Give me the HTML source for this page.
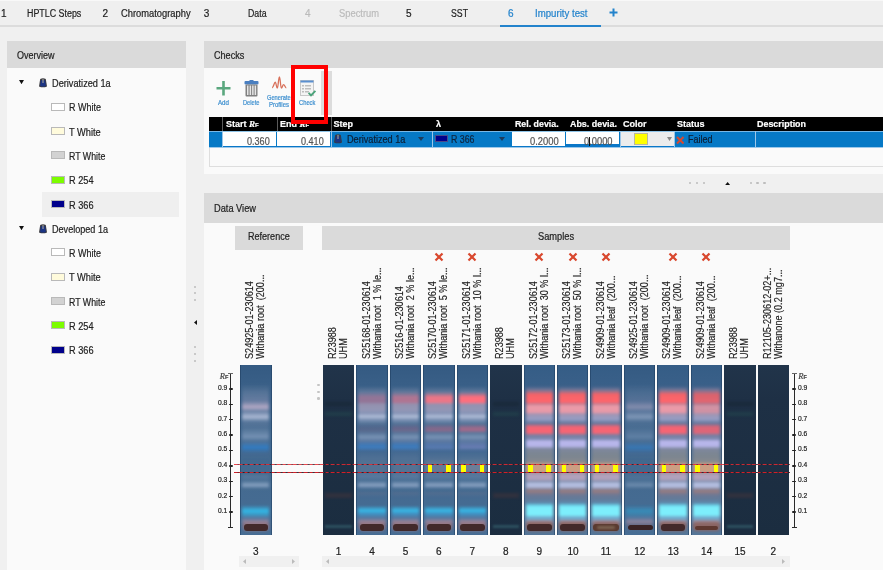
<!DOCTYPE html><html><head><meta charset="utf-8"><style>
*{margin:0;padding:0;box-sizing:border-box}
html,body{width:883px;height:570px;overflow:hidden;background:#f0f0f0;font-family:"Liberation Sans", sans-serif;color:#333}
#root{position:absolute;left:0;top:0;width:883px;height:570px;overflow:hidden;will-change:transform;background:#f0f0f0}
.a{position:absolute}
.t{position:absolute;white-space:nowrap;line-height:12px;-webkit-text-stroke:0.2px currentColor}
.hdr{position:absolute;background:#dadada}
.pan{position:absolute;background:#fafafa}
.sw{position:absolute;border:1px solid #b9b9b9}
.lbl{position:absolute;transform-origin:0 0;transform:rotate(-90deg) scaleX(0.91);font-size:10px;line-height:10.55px;white-space:nowrap;color:#222;-webkit-text-stroke:0.15px currentColor}
.trk{position:absolute;top:365px;height:170px;width:31.5px;overflow:hidden}
.x{position:absolute;top:252px;width:10px;height:10px}
</style></head><body><svg width="0" height="0" style="position:absolute"><filter id="hb" x="-20%" y="-5%" width="140%" height="110%"><feGaussianBlur stdDeviation="1.5 0.8"/></filter><filter id="hb2" x="-20%" y="-5%" width="140%" height="110%"><feGaussianBlur stdDeviation="1.7 1.2"/></filter></svg><div id="root"><div class="a" style="left:0;top:0;width:883px;height:25px;background:#efefef;border-top:1px solid #f8f8f8"></div><div class="a" style="left:0;top:25px;width:883px;height:2px;background:#dcdcdc"></div><div class="t" style="left:1.0px;top:8px;font-size:10px;color:#222;">1</div><div class="t" style="left:26.7px;top:8px;font-size:10px;color:#222;transform:scaleX(0.8882);transform-origin:0 0;">HPTLC Steps</div><div class="t" style="left:102.5px;top:8px;font-size:10px;color:#222;">2</div><div class="t" style="left:120.5px;top:8px;font-size:10px;color:#222;transform:scaleX(0.9344);transform-origin:0 0;">Chromatography</div><div class="t" style="left:203.7px;top:8px;font-size:10px;color:#222;">3</div><div class="t" style="left:247.5px;top:8px;font-size:10px;color:#222;transform:scaleX(0.8758);transform-origin:0 0;">Data</div><div class="t" style="left:305px;top:8px;font-size:10px;color:#bbb;">4</div><div class="t" style="left:339px;top:8px;font-size:10px;color:#bbb;transform:scaleX(0.9347);transform-origin:0 0;">Spectrum</div><div class="t" style="left:406px;top:8px;font-size:10px;color:#222;">5</div><div class="t" style="left:451px;top:8px;font-size:10px;color:#222;transform:scaleX(0.8741);transform-origin:0 0;">SST</div><div class="t" style="left:508px;top:8px;font-size:10px;color:#2383cc;">6</div><div class="t" style="left:535px;top:8px;font-size:10px;color:#2383cc;transform:scaleX(0.9640);transform-origin:0 0;">Impurity test</div><div class="a" style="left:499.8px;top:25px;width:101.2px;height:2px;background:#2383cc"></div><svg class="a" style="left:609px;top:8px" width="9" height="9"><path d="M4.5 0.5V8.5M0.5 4.5H8.5" stroke="#2383cc" stroke-width="2"/></svg><div class="pan" style="left:7px;top:41px;width:179px;height:529px"></div><div class="hdr" style="left:7px;top:41px;width:179px;height:26.5px"></div><div class="t" style="left:16.7px;top:50px;font-size:10px;color:#222;transform:scaleX(0.8998);transform-origin:0 0;">Overview</div><div class="a" style="left:42px;top:192px;width:137px;height:24.5px;background:#efefef"></div><svg class="a" style="left:19px;top:80.1px" width="5" height="4.2"><path d="M0 0H5L2.5 4.2Z" fill="#111"/></svg><svg class="a" style="left:38px;top:78.0px" width="10" height="10" viewBox="0 0 10 10"><path d="M2.2 1Q5 -0.4 7.8 1L9 8.4Q5 10.2 1 8.4Z" fill="#3a3a40"/><path d="M2.9 2.2H7.1L7.9 7.9Q5 9 2.1 7.9Z" fill="#1b3484"/><rect x="4.4" y="0.8" width="1.2" height="4.2" fill="#9a9a9a"/></svg><div class="t" style="left:52.3px;top:78px;font-size:10px;color:#222;transform:scaleX(0.9183);transform-origin:0 0;">Derivatized 1a</div><div class="sw" style="left:51px;top:102.5px;width:13.5px;height:8px;background:#ffffff"></div><div class="t" style="left:68.7px;top:102px;font-size:10px;color:#222;transform:scaleX(0.8970);transform-origin:0 0;">R White</div><div class="sw" style="left:51px;top:126.8px;width:13.5px;height:8px;background:#fffbdc"></div><div class="t" style="left:68.7px;top:127px;font-size:10px;color:#222;transform:scaleX(0.9260);transform-origin:0 0;">T White</div><div class="sw" style="left:51px;top:151.2px;width:13.5px;height:8px;background:#d2d2d2"></div><div class="t" style="left:68.7px;top:151px;font-size:10px;color:#222;transform:scaleX(0.8797);transform-origin:0 0;">RT White</div><div class="sw" style="left:51px;top:175.5px;width:13.5px;height:8px;background:#7cfc00"></div><div class="t" style="left:68.7px;top:175px;font-size:10px;color:#222;transform:scaleX(0.9181);transform-origin:0 0;">R 254</div><div class="sw" style="left:51px;top:199.9px;width:13.5px;height:8px;background:#00008b"></div><div class="t" style="left:68.7px;top:200px;font-size:10px;color:#222;transform:scaleX(0.9181);transform-origin:0 0;">R 366</div><svg class="a" style="left:19px;top:225.8px" width="5" height="4.2"><path d="M0 0H5L2.5 4.2Z" fill="#111"/></svg><svg class="a" style="left:38px;top:223.7px" width="10" height="10" viewBox="0 0 10 10"><path d="M2.2 1Q5 -0.4 7.8 1L9 8.4Q5 10.2 1 8.4Z" fill="#3a3a40"/><path d="M2.9 2.2H7.1L7.9 7.9Q5 9 2.1 7.9Z" fill="#1b3484"/><rect x="4.4" y="0.8" width="1.2" height="4.2" fill="#9a9a9a"/></svg><div class="t" style="left:52.3px;top:224px;font-size:10px;color:#222;transform:scaleX(0.9074);transform-origin:0 0;">Developed 1a</div><div class="sw" style="left:51px;top:248.2px;width:13.5px;height:8px;background:#ffffff"></div><div class="t" style="left:68.7px;top:248px;font-size:10px;color:#222;transform:scaleX(0.8970);transform-origin:0 0;">R White</div><div class="sw" style="left:51px;top:272.5px;width:13.5px;height:8px;background:#fffbdc"></div><div class="t" style="left:68.7px;top:272px;font-size:10px;color:#222;transform:scaleX(0.9260);transform-origin:0 0;">T White</div><div class="sw" style="left:51px;top:296.9px;width:13.5px;height:8px;background:#d2d2d2"></div><div class="t" style="left:68.7px;top:297px;font-size:10px;color:#222;transform:scaleX(0.8797);transform-origin:0 0;">RT White</div><div class="sw" style="left:51px;top:321.2px;width:13.5px;height:8px;background:#7cfc00"></div><div class="t" style="left:68.7px;top:321px;font-size:10px;color:#222;transform:scaleX(0.9181);transform-origin:0 0;">R 254</div><div class="sw" style="left:51px;top:345.6px;width:13.5px;height:8px;background:#00008b"></div><div class="t" style="left:68.7px;top:345px;font-size:10px;color:#222;transform:scaleX(0.9181);transform-origin:0 0;">R 366</div><div class="a" style="left:193.5px;top:285.5px;width:2.4px;height:2.4px;border-radius:50%;background:#bdbdbd"></div><div class="a" style="left:193.5px;top:292.1px;width:2.4px;height:2.4px;border-radius:50%;background:#bdbdbd"></div><div class="a" style="left:193.5px;top:298.8px;width:2.4px;height:2.4px;border-radius:50%;background:#bdbdbd"></div><div class="a" style="left:193.5px;top:346.0px;width:2.4px;height:2.4px;border-radius:50%;background:#bdbdbd"></div><div class="a" style="left:193.5px;top:352.8px;width:2.4px;height:2.4px;border-radius:50%;background:#bdbdbd"></div><div class="a" style="left:193.5px;top:359.6px;width:2.4px;height:2.4px;border-radius:50%;background:#bdbdbd"></div><svg class="a" style="left:194.3px;top:320.1px" width="3" height="5"><path d="M3 0V5L0 2.5Z" fill="#111"/></svg><div class="pan" style="left:204px;top:41px;width:679px;height:133px"></div><div class="hdr" style="left:204px;top:41px;width:679px;height:26.5px"></div><div class="t" style="left:213.9px;top:50px;font-size:10px;color:#222;transform:scaleX(0.9087);transform-origin:0 0;">Checks</div><svg class="a" style="left:215.5px;top:80.5px" width="15" height="15"><path d="M7.5 0V14.5M0.5 7.25H14.5" stroke="#5aa77e" stroke-width="2.6"/></svg><div class="t" style="left:217.5px;top:97px;font-size:6.5px;color:#3d8fcf;transform:scaleX(0.9511);transform-origin:0 0;">Add</div><svg class="a" style="left:243.5px;top:79.5px" width="15" height="17" viewBox="0 0 15 17"><rect x="0.5" y="1" width="14" height="3.5" rx="1" fill="#4a7fc0"/><rect x="5.5" y="0" width="4" height="2" fill="#4a7fc0"/><rect x="1.5" y="4.5" width="12" height="12" rx="1" fill="#7f7f7f"/><g fill="#e6e6e6"><rect x="3" y="5.5" width="1.5" height="9.5"/><rect x="5.6" y="5.5" width="1.5" height="9.5"/><rect x="8.1" y="5.5" width="1.5" height="9.5"/><rect x="10.6" y="5.5" width="1.5" height="9.5"/></g></svg><div class="t" style="left:242.7px;top:97px;font-size:6.5px;color:#3d8fcf;transform:scaleX(0.8782);transform-origin:0 0;">Delete</div><svg class="a" style="left:271px;top:76px" width="16" height="13" viewBox="0 0 16 13"><path d="M1.1 11.8C2.6 11.6 3.2 6.2 4.2 6.2S5.4 12.1 6.3 12.1S7.5 0.9 8.4 0.9S9.5 12.1 10.4 12.1S11.6 8.6 12.6 8.6S14.3 11.8 15.3 11.8" fill="none" stroke="#d8705a" stroke-width="1.3"/></svg><div class="t" style="left:266.7px;top:92px;font-size:6.5px;color:#3d8fcf;transform:scaleX(0.8745);transform-origin:0 0;">Generate</div><div class="t" style="left:268.8px;top:98.8px;font-size:6.5px;color:#3d8fcf;transform:scaleX(0.9228);transform-origin:0 0;">Profiles</div><svg class="a" style="left:299.5px;top:79.5px" width="17" height="17" viewBox="0 0 17 17"><rect x="0.5" y="0.5" width="13" height="15" fill="#f4f4f4" stroke="#c8c8c8"/><rect x="0.5" y="0.5" width="13" height="2" fill="#5b8fcf"/><g fill="#bdbdbd"><rect x="2" y="5" width="2" height="1.5"/><rect x="5" y="5" width="6" height="1.5"/><rect x="2" y="8" width="2" height="1.5"/><rect x="5" y="8" width="6" height="1.5"/><rect x="2" y="11" width="2" height="1.5"/><rect x="5" y="11" width="4" height="1.5"/></g><path d="M8.6 12.8L11 15.3L15.4 10.9" fill="none" stroke="#4aa37a" stroke-width="1.9"/></svg><div class="t" style="left:298.8px;top:97.2px;font-size:6.5px;color:#3d8fcf;transform:scaleX(0.8901);transform-origin:0 0;">Check</div><div class="a" style="left:321px;top:71px;width:11px;height:44px;background:#dcdcdc"></div><div class="a" style="left:208.5px;top:116.5px;width:680px;height:50px;border:1px solid #dedede;background:#fafafa"></div><div class="a" style="left:209px;top:117px;width:674px;height:14px;background:#000"></div><div class="a" style="left:209px;top:131px;width:674px;height:16.5px;background:#0679c6;border-top:1px solid #78b8e6;border-bottom:1px solid #9cc8ea"></div><div class="a" style="left:222px;top:117px;width:1px;height:14px;background:#5a5a5a"></div><div class="a" style="left:222px;top:131px;width:1px;height:16px;background:#9cc6e8"></div><div class="a" style="left:276.5px;top:117px;width:1px;height:14px;background:#5a5a5a"></div><div class="a" style="left:276.5px;top:131px;width:1px;height:16px;background:#9cc6e8"></div><div class="a" style="left:330.5px;top:117px;width:1px;height:14px;background:#5a5a5a"></div><div class="a" style="left:330.5px;top:131px;width:1px;height:16px;background:#9cc6e8"></div><div class="a" style="left:431.5px;top:131px;width:1px;height:16px;background:#9cc6e8"></div><div class="a" style="left:511.5px;top:131px;width:1px;height:16px;background:#9cc6e8"></div><div class="a" style="left:566px;top:131px;width:1px;height:16px;background:#9cc6e8"></div><div class="a" style="left:620px;top:131px;width:1px;height:16px;background:#9cc6e8"></div><div class="a" style="left:673.5px;top:131px;width:1px;height:16px;background:#9cc6e8"></div><div class="a" style="left:754.5px;top:131px;width:1px;height:16px;background:#9cc6e8"></div><div class="t" style="left:226px;top:118px;font-size:9px;color:#fff;font-weight:bold;">Start <i style="font-family:'Liberation Serif'">R</i><span style="font-size:6px">F</span></div><div class="t" style="left:280px;top:118px;font-size:9px;color:#fff;font-weight:bold;">End <i style="font-family:'Liberation Serif'">R</i><span style="font-size:6px">F</span></div><div class="t" style="left:333.5px;top:118px;font-size:9px;color:#fff;font-weight:bold;">Step</div><div class="t" style="left:436px;top:118px;font-size:9px;color:#fff;font-weight:bold;">λ</div><div class="t" style="left:515px;top:118px;font-size:9px;color:#fff;font-weight:bold;transform:scaleX(0.9793);transform-origin:0 0;">Rel. devia.</div><div class="t" style="left:569.5px;top:118px;font-size:9px;color:#fff;font-weight:bold;transform:scaleX(0.9891);transform-origin:0 0;">Abs. devia.</div><div class="t" style="left:623px;top:118px;font-size:9px;color:#fff;font-weight:bold;transform:scaleX(1.0001);transform-origin:0 0;">Color</div><div class="t" style="left:677px;top:118px;font-size:9px;color:#fff;font-weight:bold;transform:scaleX(0.9998);transform-origin:0 0;">Status</div><div class="t" style="left:757.4px;top:118px;font-size:9px;color:#fff;font-weight:bold;transform:scaleX(0.9897);transform-origin:0 0;">Description</div><div class="a" style="left:223px;top:131px;width:53.4px;height:16px;background:#fff;border-top:1.5px solid #8ec4e8;border-bottom:1.3px solid #0a77c8"></div><div class="t" style="left:247.09999999999997px;top:136px;font-size:10px;color:#555;transform:scaleX(0.9071);transform-origin:0 0;">0.360</div><div class="a" style="left:277.4px;top:131px;width:53px;height:16px;background:#fff;border-top:1.5px solid #8ec4e8;border-bottom:1.3px solid #0a77c8"></div><div class="t" style="left:301.09999999999997px;top:136px;font-size:10px;color:#555;transform:scaleX(0.9071);transform-origin:0 0;">0.410</div><div class="a" style="left:511.8px;top:131px;width:53.7px;height:16px;background:#fff;border-top:1.5px solid #8ec4e8;border-bottom:1.3px solid #0a77c8"></div><div class="t" style="left:530.3px;top:136px;font-size:10px;color:#555;transform:scaleX(0.9351);transform-origin:0 0;">0.2000</div><div class="a" style="left:566.2px;top:131px;width:52.8px;height:16px;background:#fff;border-top:1.5px solid #8ec4e8;border-bottom:1.3px solid #0a77c8"></div><div class="a" style="left:566.2px;top:143.8px;width:52.8px;height:3.2px;background:#0a77c8"></div><div class="t" style="left:583.9px;top:136px;font-size:10px;color:#555;transform:scaleX(0.9318);transform-origin:0 0;">0.0000</div><div class="a" style="left:589.3px;top:137px;width:1px;height:9px;background:#111"></div><svg class="a" style="left:333px;top:134px" width="10" height="10" viewBox="0 0 10 10"><path d="M2.2 1Q5 -0.4 7.8 1L9 8.4Q5 10.2 1 8.4Z" fill="#3a3a40"/><path d="M2.9 2.2H7.1L7.9 7.9Q5 9 2.1 7.9Z" fill="#1b3484"/><rect x="4.4" y="0.8" width="1.2" height="4.2" fill="#9a9a9a"/></svg><div class="t" style="left:347.4px;top:134px;font-size:10px;color:#0d1e33;transform:scaleX(0.9136);transform-origin:0 0;">Derivatized 1a</div><svg class="a" style="left:418px;top:137px" width="6" height="4"><path d="M0 0H6L3 4Z" fill="#1d3b5c"/></svg><div class="a" style="left:434.5px;top:135px;width:13px;height:7px;background:#00008b;border:1px solid #4a4a8a"></div><div class="t" style="left:451px;top:134px;font-size:10px;color:#10243c;transform:scaleX(0.8807);transform-origin:0 0;">R 366</div><svg class="a" style="left:498.5px;top:137px" width="6" height="4"><path d="M0 0H6L3 4Z" fill="#1d3b5c"/></svg><div class="a" style="left:620.5px;top:131px;width:53px;height:16px;background:#ececec;border-top:1.5px solid #8ec4e8;border-bottom:1.3px solid #0a77c8"></div><div class="a" style="left:633.5px;top:132.5px;width:14.5px;height:12.8px;background:#ffff00;border:1px solid #b8b8a0"></div><svg class="a" style="left:667px;top:137px" width="5" height="4"><path d="M0 0H5L2.5 4Z" fill="#888"/></svg><svg class="a" style="left:675.5px;top:135.5px" width="8.5" height="8.5"><path d="M1 1L7.5 7.5M7.5 1L1 7.5" stroke="#d9482e" stroke-width="2"/></svg><div class="t" style="left:688.4px;top:134px;font-size:10px;color:#0d1e33;transform:scaleX(0.8959);transform-origin:0 0;">Failed</div><div class="a" style="left:688.9px;top:181.9px;width:2.4px;height:2.4px;border-radius:50%;background:#bdbdbd"></div><div class="a" style="left:695.8px;top:181.9px;width:2.4px;height:2.4px;border-radius:50%;background:#bdbdbd"></div><div class="a" style="left:702.5px;top:181.9px;width:2.4px;height:2.4px;border-radius:50%;background:#bdbdbd"></div><div class="a" style="left:749.6px;top:181.9px;width:2.4px;height:2.4px;border-radius:50%;background:#bdbdbd"></div><div class="a" style="left:756.4px;top:181.9px;width:2.4px;height:2.4px;border-radius:50%;background:#bdbdbd"></div><div class="a" style="left:763.2px;top:181.9px;width:2.4px;height:2.4px;border-radius:50%;background:#bdbdbd"></div><svg class="a" style="left:725.4px;top:182.3px" width="5.2" height="3.2"><path d="M0 3.2H5.2L2.6 0Z" fill="#111"/></svg><div class="pan" style="left:204px;top:193px;width:679px;height:377px"></div><div class="hdr" style="left:204px;top:193px;width:679px;height:29.6px"></div><div class="t" style="left:214.1px;top:203px;font-size:10px;color:#222;transform:scaleX(0.9252);transform-origin:0 0;">Data View</div><div class="hdr" style="left:234.7px;top:225.6px;width:68.3px;height:24px"></div><div class="t" style="left:248px;top:231px;font-size:10px;color:#222;transform:scaleX(0.9038);transform-origin:0 0;">Reference</div><div class="hdr" style="left:321.8px;top:225.6px;width:468.2px;height:24px"></div><div class="t" style="left:537.6px;top:231px;font-size:10px;color:#222;transform:scaleX(0.9279);transform-origin:0 0;">Samples</div><div class="trk" style="left:240.0px;background:linear-gradient(#345a82 0.0px,#385e86 15.0px,#3f658c 55.0px,#43698f 105.0px,#476d94 170.0px);box-shadow:inset 1px 0 0 rgba(30,60,95,0.55),inset -1px 0 0 rgba(30,60,95,0.55)"><div class="a" style="left:2.2px;right:2.2px;top:0;bottom:0;background:linear-gradient(rgba(170,180,205,0) 19.0px,rgba(170,175,200,0.25) 28.0px,rgba(180,170,200,0.35) 36.0px,rgba(215,190,215,0.75) 42.0px,rgba(180,180,210,0.4) 46.5px,rgba(210,215,238,0.72) 52.0px,rgba(150,160,190,0.25) 57.0px,rgba(140,155,185,0.2) 63.0px,rgba(165,185,215,0.5) 71.8px,rgba(120,150,190,0.2) 76.5px,rgba(45,130,210,0.75) 82.5px,rgba(70,110,170,0.12) 88.0px,rgba(100,120,160,0) 95.0px,rgba(150,170,200,0) 107.5px,rgba(150,170,200,0.22) 112.0px,rgba(150,170,200,0.08) 115.5px,rgba(180,198,225,0.58) 120.2px,rgba(180,200,225,0) 124.0px,rgba(50,190,238,0) 140.0px,rgba(50,190,238,0.92) 145.8px,rgba(50,190,238,0.5) 150.0px,rgba(120,140,180,0.3) 153.0px,rgba(195,150,165,0.55) 156.5px,rgba(150,100,110,0.4) 160.0px,rgba(150,100,110,0) 166.0px);filter:url(#hb)"></div><div class="a" style="left:2.5px;right:2.5px;top:156.8px;height:9px;background:rgba(175,125,130,0.55);filter:blur(1.4px);border-radius:4px"></div><div class="a" style="left:3.5px;right:3.5px;top:159.0px;height:6.5px;background:#42292a;filter:blur(0.7px);border-radius:3px"></div></div><div class="trk" style="left:322.9px;background:linear-gradient(#21344a 0.0px,#1e3045 35.0px,#1b2d40 170.0px);"><div class="a" style="left:2.5px;right:2.5px;top:37.0px;height:4px;background:rgba(15,25,35,0.3);filter:blur(1.8px);border-radius:0px"></div><div class="a" style="left:2.5px;right:2.5px;top:46.5px;height:4px;background:rgba(40,110,95,0.2);filter:blur(1.8px);border-radius:0px"></div><div class="a" style="left:2.5px;right:2.5px;top:127.5px;height:5px;background:rgba(110,60,50,0.25);filter:blur(1.8px);border-radius:0px"></div><div class="a" style="left:2.5px;right:2.5px;top:160.2px;height:2.5px;background:rgba(70,130,140,0.4);filter:blur(1px);border-radius:0px"></div></div><div class="trk" style="left:356.3px;background:linear-gradient(#345a82 0.0px,#385e86 15.0px,#3f658c 55.0px,#43698f 105.0px,#476d94 170.0px);box-shadow:inset 1px 0 0 rgba(30,60,95,0.55),inset -1px 0 0 rgba(30,60,95,0.55)"><div class="a" style="left:2.2px;right:2.2px;top:0;bottom:0;background:linear-gradient(rgba(180,180,205,0) 21.0px,rgba(180,175,200,0.3) 27.0px,rgba(205,130,160,0.6) 32.0px,rgba(205,130,160,0.6) 37.0px,rgba(205,175,200,0.6) 39.5px,rgba(200,182,208,0.62) 45.0px,rgba(190,185,215,0.55) 48.0px,rgba(210,215,238,0.75) 51.5px,rgba(180,185,215,0.5) 55.0px,rgba(140,150,180,0.22) 59.0px,rgba(200,110,140,0.12) 62.0px,rgba(215,105,135,0.15) 65.0px,rgba(150,155,185,0.28) 68.0px,rgba(175,190,220,0.5) 72.0px,rgba(150,160,200,0.3) 76.0px,rgba(60,135,215,0.52) 79.5px,rgba(60,135,215,0.65) 82.5px,rgba(70,110,170,0.15) 86.0px,rgba(160,165,190,0.12) 93.0px,rgba(185,165,170,0.15) 100.0px,rgba(185,165,170,0.15) 106.0px,rgba(160,170,200,0.15) 108.0px,rgba(150,170,200,0.25) 111.8px,rgba(150,170,200,0.08) 115.5px,rgba(185,200,228,0.58) 120.2px,rgba(180,200,225,0) 124.0px,rgba(160,120,130,0.0) 126.0px,rgba(160,120,130,0.15) 128.0px,rgba(160,120,130,0) 132.0px,rgba(50,180,230,0) 140.5px,rgba(55,190,238,0.92) 145.4px,rgba(60,160,215,0.6) 149.5px,rgba(120,140,180,0.3) 153.0px,rgba(195,145,160,0.6) 156.5px,rgba(150,100,110,0.45) 160.0px,rgba(150,100,110,0) 166.0px);filter:url(#hb)"></div><div class="a" style="left:2.5px;right:2.5px;top:156.8px;height:9px;background:rgba(175,125,130,0.55);filter:blur(1.4px);border-radius:4px"></div><div class="a" style="left:3.5px;right:3.5px;top:159.0px;height:6.5px;background:#42292a;filter:blur(0.7px);border-radius:3px"></div></div><div class="trk" style="left:389.8px;background:linear-gradient(#345a82 0.0px,#385e86 15.0px,#3f658c 55.0px,#43698f 105.0px,#476d94 170.0px);box-shadow:inset 1px 0 0 rgba(30,60,95,0.55),inset -1px 0 0 rgba(30,60,95,0.55)"><div class="a" style="left:2.2px;right:2.2px;top:0;bottom:0;background:linear-gradient(rgba(180,180,205,0) 21.0px,rgba(180,175,200,0.3) 27.0px,rgba(225,125,150,0.7) 32.0px,rgba(225,125,150,0.7) 37.0px,rgba(205,175,200,0.6) 39.5px,rgba(200,182,208,0.62) 45.0px,rgba(190,185,215,0.55) 48.0px,rgba(210,215,238,0.75) 51.5px,rgba(180,185,215,0.5) 55.0px,rgba(140,150,180,0.22) 59.0px,rgba(200,110,140,0.24) 62.0px,rgba(215,105,135,0.3) 65.0px,rgba(150,155,185,0.28) 68.0px,rgba(175,190,220,0.5) 72.0px,rgba(150,160,200,0.3) 76.0px,rgba(60,135,215,0.52) 79.5px,rgba(60,135,215,0.65) 82.5px,rgba(70,110,170,0.15) 86.0px,rgba(160,165,190,0.12) 93.0px,rgba(185,165,170,0.15) 100.0px,rgba(185,165,170,0.15) 106.0px,rgba(160,170,200,0.15) 108.0px,rgba(150,170,200,0.25) 111.8px,rgba(150,170,200,0.08) 115.5px,rgba(185,200,228,0.58) 120.2px,rgba(180,200,225,0) 124.0px,rgba(160,120,130,0.0) 126.0px,rgba(160,120,130,0.15) 128.0px,rgba(160,120,130,0) 132.0px,rgba(50,180,230,0) 140.5px,rgba(55,190,238,0.92) 145.4px,rgba(60,160,215,0.6) 149.5px,rgba(120,140,180,0.3) 153.0px,rgba(195,145,160,0.6) 156.5px,rgba(150,100,110,0.45) 160.0px,rgba(150,100,110,0) 166.0px);filter:url(#hb)"></div><div class="a" style="left:2.5px;right:2.5px;top:156.8px;height:9px;background:rgba(175,125,130,0.55);filter:blur(1.4px);border-radius:4px"></div><div class="a" style="left:3.5px;right:3.5px;top:159.0px;height:6.5px;background:#42292a;filter:blur(0.7px);border-radius:3px"></div></div><div class="trk" style="left:423.2px;background:linear-gradient(#345a82 0.0px,#385e86 15.0px,#3f658c 55.0px,#43698f 105.0px,#476d94 170.0px);box-shadow:inset 1px 0 0 rgba(30,60,95,0.55),inset -1px 0 0 rgba(30,60,95,0.55)"><div class="a" style="left:2.2px;right:2.2px;top:0;bottom:0;background:linear-gradient(rgba(180,180,205,0) 21.0px,rgba(180,175,200,0.3) 27.0px,rgba(255,120,135,0.9) 32.0px,rgba(255,120,135,0.9) 37.0px,rgba(205,175,200,0.6) 39.5px,rgba(200,182,208,0.62) 45.0px,rgba(190,185,215,0.55) 48.0px,rgba(210,215,238,0.75) 51.5px,rgba(180,185,215,0.5) 55.0px,rgba(140,150,180,0.22) 59.0px,rgba(200,110,140,0.4) 62.0px,rgba(215,105,135,0.5) 65.0px,rgba(150,155,185,0.28) 68.0px,rgba(175,190,220,0.5) 72.0px,rgba(150,160,200,0.3) 76.0px,rgba(110,140,210,0.4) 79.5px,rgba(110,140,210,0.5) 82.5px,rgba(70,110,170,0.15) 86.0px,rgba(160,165,190,0.12) 93.0px,rgba(185,165,170,0.3) 100.0px,rgba(185,165,170,0.3) 106.0px,rgba(160,170,200,0.15) 108.0px,rgba(150,170,200,0.25) 111.8px,rgba(150,170,200,0.08) 115.5px,rgba(185,200,228,0.58) 120.2px,rgba(180,200,225,0) 124.0px,rgba(160,120,130,0.0) 126.0px,rgba(160,120,130,0.15) 128.0px,rgba(160,120,130,0) 132.0px,rgba(50,180,230,0) 140.5px,rgba(55,190,238,0.92) 145.4px,rgba(60,160,215,0.6) 149.5px,rgba(120,140,180,0.3) 153.0px,rgba(195,145,160,0.6) 156.5px,rgba(150,100,110,0.45) 160.0px,rgba(150,100,110,0) 166.0px);filter:url(#hb)"></div><div class="a" style="left:2.5px;right:2.5px;top:156.8px;height:9px;background:rgba(175,125,130,0.55);filter:blur(1.4px);border-radius:4px"></div><div class="a" style="left:3.5px;right:3.5px;top:159.0px;height:6.5px;background:#42292a;filter:blur(0.7px);border-radius:3px"></div></div><div class="trk" style="left:456.6px;background:linear-gradient(#345a82 0.0px,#385e86 15.0px,#3f658c 55.0px,#43698f 105.0px,#476d94 170.0px);box-shadow:inset 1px 0 0 rgba(30,60,95,0.55),inset -1px 0 0 rgba(30,60,95,0.55)"><div class="a" style="left:2.2px;right:2.2px;top:0;bottom:0;background:linear-gradient(rgba(180,180,205,0) 21.0px,rgba(180,175,200,0.3) 27.0px,rgba(255,110,125,1.0) 32.0px,rgba(255,110,125,1.0) 37.0px,rgba(205,175,200,0.6) 39.5px,rgba(200,182,208,0.62) 45.0px,rgba(190,185,215,0.55) 48.0px,rgba(210,215,238,0.75) 51.5px,rgba(180,185,215,0.5) 55.0px,rgba(140,150,180,0.22) 59.0px,rgba(200,110,140,0.5599999999999999) 62.0px,rgba(215,105,135,0.7) 65.0px,rgba(150,155,185,0.28) 68.0px,rgba(175,190,220,0.5) 72.0px,rgba(150,160,200,0.3) 76.0px,rgba(140,145,215,0.4) 79.5px,rgba(140,145,215,0.5) 82.5px,rgba(70,110,170,0.15) 86.0px,rgba(160,165,190,0.12) 93.0px,rgba(185,165,170,0.35) 100.0px,rgba(185,165,170,0.35) 106.0px,rgba(160,170,200,0.15) 108.0px,rgba(150,170,200,0.25) 111.8px,rgba(150,170,200,0.08) 115.5px,rgba(185,200,228,0.58) 120.2px,rgba(180,200,225,0) 124.0px,rgba(160,120,130,0.0) 126.0px,rgba(160,120,130,0.15) 128.0px,rgba(160,120,130,0) 132.0px,rgba(50,180,230,0) 140.5px,rgba(55,190,238,0.92) 145.4px,rgba(60,160,215,0.6) 149.5px,rgba(120,140,180,0.3) 153.0px,rgba(195,145,160,0.6) 156.5px,rgba(150,100,110,0.45) 160.0px,rgba(150,100,110,0) 166.0px);filter:url(#hb)"></div><div class="a" style="left:2.5px;right:2.5px;top:156.8px;height:9px;background:rgba(175,125,130,0.55);filter:blur(1.4px);border-radius:4px"></div><div class="a" style="left:3.5px;right:3.5px;top:159.0px;height:6.5px;background:#42292a;filter:blur(0.7px);border-radius:3px"></div></div><div class="trk" style="left:490.0px;background:linear-gradient(#21344a 0.0px,#1e3045 35.0px,#1b2d40 170.0px);"><div class="a" style="left:2.5px;right:2.5px;top:37.0px;height:4px;background:rgba(15,25,35,0.3);filter:blur(1.8px);border-radius:0px"></div><div class="a" style="left:2.5px;right:2.5px;top:46.5px;height:4px;background:rgba(40,110,95,0.2);filter:blur(1.8px);border-radius:0px"></div><div class="a" style="left:2.5px;right:2.5px;top:127.5px;height:5px;background:rgba(110,60,50,0.25);filter:blur(1.8px);border-radius:0px"></div><div class="a" style="left:2.5px;right:2.5px;top:160.2px;height:2.5px;background:rgba(70,130,140,0.4);filter:blur(1px);border-radius:0px"></div></div><div class="trk" style="left:523.5px;background:linear-gradient(#355d86 0.0px,#3a6089 23.0px,#4d6a8e 55.0px,#5a7593 95.0px,#5c7898 135.0px,#557698 170.0px);box-shadow:inset 1px 0 0 rgba(30,60,95,0.55),inset -1px 0 0 rgba(30,60,95,0.55)"><div class="a" style="left:2.2px;right:2.2px;top:0;bottom:0;background:linear-gradient(rgba(195,170,190,0) 21.0px,rgba(200,150,170,0.4) 25.0px,rgba(255,98,102,0.95) 29.5px,rgba(255,102,108,1.0) 37.0px,rgba(230,130,145,0.75) 39.0px,rgba(250,160,170,0.92) 41.0px,rgba(248,158,170,0.9) 47.0px,rgba(205,172,198,0.65) 49.5px,rgba(182,180,220,0.7) 54.0px,rgba(135,135,172,0.4) 58.5px,rgba(255,98,112,0.95) 62.0px,rgba(255,100,114,0.95) 67.5px,rgba(160,145,180,0.45) 70.5px,rgba(165,160,205,0.55) 74.0px,rgba(195,190,245,0.9) 76.5px,rgba(195,190,245,0.88) 81.0px,rgba(165,155,165,0.5) 84.0px,rgba(165,155,140,0.45) 91.0px,rgba(180,158,138,0.5) 97.0px,rgba(220,165,128,0.88) 99.5px,rgba(220,165,128,0.88) 106.5px,rgba(200,165,180,0.6) 108.5px,rgba(215,180,205,0.72) 110.5px,rgba(210,178,202,0.68) 114.5px,rgba(175,175,205,0.5) 116.5px,rgba(200,205,240,0.8) 118.5px,rgba(200,205,240,0.78) 122.0px,rgba(180,140,140,0.5) 124.0px,rgba(185,125,115,0.6) 126.5px,rgba(140,120,140,0.35) 130.0px,rgba(110,135,165,0.25) 135.0px,rgba(95,170,210,0.35) 138.0px,rgba(110,228,248,0.85) 140.5px,rgba(125,238,252,1.0) 142.5px,rgba(125,238,252,1.0) 149.5px,rgba(130,205,238,0.65) 152.5px,rgba(140,190,225,0.55) 154.5px,rgba(195,150,150,0.65) 156.5px,rgba(150,100,100,0.4) 160.0px,rgba(150,100,100,0) 166.0px);filter:url(#hb2)"></div><div class="a" style="left:2.5px;right:2.5px;top:157.0px;height:9px;background:rgba(150,95,85,0.7);filter:blur(1.5px);border-radius:4px"></div><div class="a" style="left:3.5px;right:3.5px;top:159.0px;height:6.5px;background:#42292a;filter:blur(0.7px);border-radius:3px"></div></div><div class="trk" style="left:556.9px;background:linear-gradient(#355d86 0.0px,#3a6089 23.0px,#4d6a8e 55.0px,#5a7593 95.0px,#5c7898 135.0px,#557698 170.0px);box-shadow:inset 1px 0 0 rgba(30,60,95,0.55),inset -1px 0 0 rgba(30,60,95,0.55)"><div class="a" style="left:2.2px;right:2.2px;top:0;bottom:0;background:linear-gradient(rgba(195,170,190,0) 21.0px,rgba(200,150,170,0.4) 25.0px,rgba(255,98,102,0.95) 29.5px,rgba(255,102,108,1.0) 37.0px,rgba(230,130,145,0.75) 39.0px,rgba(250,160,170,0.92) 41.0px,rgba(248,158,170,0.9) 47.0px,rgba(205,172,198,0.65) 49.5px,rgba(182,180,220,0.7) 54.0px,rgba(135,135,172,0.4) 58.5px,rgba(255,98,112,0.95) 62.0px,rgba(255,100,114,0.95) 67.5px,rgba(160,145,180,0.45) 70.5px,rgba(165,160,205,0.55) 74.0px,rgba(195,190,245,0.9) 76.5px,rgba(195,190,245,0.88) 81.0px,rgba(165,155,165,0.5) 84.0px,rgba(165,155,140,0.45) 91.0px,rgba(180,158,138,0.5) 97.0px,rgba(220,165,128,0.88) 99.5px,rgba(220,165,128,0.88) 106.5px,rgba(200,165,180,0.6) 108.5px,rgba(215,180,205,0.72) 110.5px,rgba(210,178,202,0.68) 114.5px,rgba(175,175,205,0.5) 116.5px,rgba(200,205,240,0.8) 118.5px,rgba(200,205,240,0.78) 122.0px,rgba(180,140,140,0.5) 124.0px,rgba(185,125,115,0.6) 126.5px,rgba(140,120,140,0.35) 130.0px,rgba(110,135,165,0.25) 135.0px,rgba(95,170,210,0.35) 138.0px,rgba(110,228,248,0.85) 140.5px,rgba(125,238,252,1.0) 142.5px,rgba(125,238,252,1.0) 149.5px,rgba(130,205,238,0.65) 152.5px,rgba(140,190,225,0.55) 154.5px,rgba(195,150,150,0.65) 156.5px,rgba(150,100,100,0.4) 160.0px,rgba(150,100,100,0) 166.0px);filter:url(#hb2)"></div><div class="a" style="left:2.5px;right:2.5px;top:157.0px;height:9px;background:rgba(150,95,85,0.7);filter:blur(1.5px);border-radius:4px"></div><div class="a" style="left:3.5px;right:3.5px;top:159.0px;height:6.5px;background:#42292a;filter:blur(0.7px);border-radius:3px"></div></div><div class="trk" style="left:590.3px;background:linear-gradient(#355d86 0.0px,#3a6089 23.0px,#4d6a8e 55.0px,#5a7593 95.0px,#5c7898 135.0px,#557698 170.0px);box-shadow:inset 1px 0 0 rgba(30,60,95,0.55),inset -1px 0 0 rgba(30,60,95,0.55)"><div class="a" style="left:2.2px;right:2.2px;top:0;bottom:0;background:linear-gradient(rgba(195,170,190,0) 21.0px,rgba(200,150,170,0.4) 25.0px,rgba(255,98,102,0.95) 29.5px,rgba(255,102,108,1.0) 37.0px,rgba(230,130,145,0.75) 39.0px,rgba(250,160,170,0.92) 41.0px,rgba(248,158,170,0.9) 47.0px,rgba(205,172,198,0.65) 49.5px,rgba(182,180,220,0.7) 54.0px,rgba(135,135,172,0.4) 58.5px,rgba(255,98,112,0.95) 62.0px,rgba(255,100,114,0.95) 67.5px,rgba(160,145,180,0.45) 70.5px,rgba(165,160,205,0.55) 74.0px,rgba(195,190,245,0.9) 76.5px,rgba(195,190,245,0.88) 81.0px,rgba(165,155,165,0.5) 84.0px,rgba(165,155,140,0.45) 91.0px,rgba(180,158,138,0.5) 97.0px,rgba(220,165,128,0.88) 99.5px,rgba(220,165,128,0.88) 106.5px,rgba(200,165,180,0.6) 108.5px,rgba(215,180,205,0.72) 110.5px,rgba(210,178,202,0.68) 114.5px,rgba(175,175,205,0.5) 116.5px,rgba(200,205,240,0.8) 118.5px,rgba(200,205,240,0.78) 122.0px,rgba(180,140,140,0.5) 124.0px,rgba(185,125,115,0.6) 126.5px,rgba(140,120,140,0.35) 130.0px,rgba(110,135,165,0.25) 135.0px,rgba(95,170,210,0.35) 138.0px,rgba(110,228,248,0.85) 140.5px,rgba(125,238,252,1.0) 142.5px,rgba(125,238,252,1.0) 149.5px,rgba(130,205,238,0.65) 152.5px,rgba(140,190,225,0.55) 154.5px,rgba(195,150,150,0.65) 156.5px,rgba(150,100,100,0.4) 160.0px,rgba(150,100,100,0) 166.0px);filter:url(#hb2)"></div><div class="a" style="left:2.5px;right:2.5px;top:157.0px;height:9px;background:rgba(150,95,85,0.7);filter:blur(1.5px);border-radius:4px"></div><div class="a" style="left:3px;right:3px;top:158.5px;height:7.5px;background:#5a3a30;filter:blur(0.7px);border-radius:3px"></div><div class="a" style="left:7px;right:7px;top:160.8px;height:3px;background:#7a6250;filter:blur(1.2px);border-radius:3px"></div></div><div class="trk" style="left:623.8px;background:linear-gradient(#345a82 0.0px,#385e86 15.0px,#3f658c 55.0px,#43698f 105.0px,#476d94 170.0px);box-shadow:inset 1px 0 0 rgba(30,60,95,0.55),inset -1px 0 0 rgba(30,60,95,0.55)"><div class="a" style="left:2.2px;right:2.2px;top:0;bottom:0;background:linear-gradient(rgba(170,180,205,0) 19.0px,rgba(170,175,200,0.15) 28.0px,rgba(180,170,200,0.21) 36.0px,rgba(215,190,215,0.44999999999999996) 42.0px,rgba(180,180,210,0.24) 46.5px,rgba(210,215,238,0.432) 52.0px,rgba(150,160,190,0.15) 57.0px,rgba(140,155,185,0.12) 63.0px,rgba(165,185,215,0.3) 71.8px,rgba(120,150,190,0.12) 76.5px,rgba(45,130,210,0.54) 82.5px,rgba(70,110,170,0.12) 88.0px,rgba(100,120,160,0) 95.0px,rgba(150,170,200,0) 107.5px,rgba(150,170,200,0.132) 112.0px,rgba(150,170,200,0.08) 115.5px,rgba(180,198,225,0.348) 120.2px,rgba(180,200,225,0) 124.0px,rgba(45,165,215,0) 140.0px,rgba(45,165,215,0.552) 145.8px,rgba(45,165,215,0.3) 150.0px,rgba(120,140,180,0.3) 153.0px,rgba(195,150,165,0.55) 156.5px,rgba(150,100,110,0.4) 160.0px,rgba(150,100,110,0) 166.0px);filter:url(#hb)"></div><div class="a" style="left:4.5px;right:2.5px;top:159.8px;height:5px;background:#3a2224;filter:blur(0.7px);border-radius:3px"></div></div><div class="trk" style="left:657.2px;background:linear-gradient(#355d86 0.0px,#3a6089 23.0px,#4d6a8e 55.0px,#5a7593 95.0px,#5c7898 135.0px,#557698 170.0px);box-shadow:inset 1px 0 0 rgba(30,60,95,0.55),inset -1px 0 0 rgba(30,60,95,0.55)"><div class="a" style="left:2.2px;right:2.2px;top:0;bottom:0;background:linear-gradient(rgba(195,170,190,0) 21.0px,rgba(200,150,170,0.4) 25.0px,rgba(255,98,102,0.95) 29.5px,rgba(255,102,108,1.0) 37.0px,rgba(230,130,145,0.75) 39.0px,rgba(250,160,170,0.92) 41.0px,rgba(248,158,170,0.9) 47.0px,rgba(205,172,198,0.65) 49.5px,rgba(182,180,220,0.7) 54.0px,rgba(135,135,172,0.4) 58.5px,rgba(255,98,112,0.95) 62.0px,rgba(255,100,114,0.95) 67.5px,rgba(160,145,180,0.45) 70.5px,rgba(165,160,205,0.55) 74.0px,rgba(195,190,245,0.9) 76.5px,rgba(195,190,245,0.88) 81.0px,rgba(165,155,165,0.5) 84.0px,rgba(165,155,140,0.45) 91.0px,rgba(180,158,138,0.5) 97.0px,rgba(220,165,128,0.88) 99.5px,rgba(220,165,128,0.88) 106.5px,rgba(200,165,180,0.6) 108.5px,rgba(215,180,205,0.72) 110.5px,rgba(210,178,202,0.68) 114.5px,rgba(175,175,205,0.5) 116.5px,rgba(200,205,240,0.8) 118.5px,rgba(200,205,240,0.78) 122.0px,rgba(180,140,140,0.5) 124.0px,rgba(185,125,115,0.6) 126.5px,rgba(140,120,140,0.35) 130.0px,rgba(110,135,165,0.25) 135.0px,rgba(95,170,210,0.35) 138.0px,rgba(110,228,248,0.85) 140.5px,rgba(125,238,252,1.0) 142.5px,rgba(125,238,252,1.0) 149.5px,rgba(130,205,238,0.65) 152.5px,rgba(140,190,225,0.55) 154.5px,rgba(195,150,150,0.65) 156.5px,rgba(150,100,100,0.4) 160.0px,rgba(150,100,100,0) 166.0px);filter:url(#hb2)"></div><div class="a" style="left:2.5px;right:2.5px;top:157.0px;height:9px;background:rgba(150,95,85,0.7);filter:blur(1.5px);border-radius:4px"></div><div class="a" style="left:3.5px;right:3.5px;top:159.0px;height:6.5px;background:#42292a;filter:blur(0.7px);border-radius:3px"></div></div><div class="trk" style="left:690.6px;background:linear-gradient(#355d86 0.0px,#3a6089 23.0px,#4d6a8e 55.0px,#5a7593 95.0px,#5c7898 135.0px,#557698 170.0px);box-shadow:inset 1px 0 0 rgba(30,60,95,0.55),inset -1px 0 0 rgba(30,60,95,0.55)"><div class="a" style="left:2.2px;right:2.2px;top:0;bottom:0;background:linear-gradient(rgba(195,170,190,0) 21.0px,rgba(200,150,170,0.4) 25.0px,rgba(255,98,102,0.8075) 29.5px,rgba(255,102,108,0.85) 37.0px,rgba(230,130,145,0.6375) 39.0px,rgba(250,160,170,0.782) 41.0px,rgba(248,158,170,0.765) 47.0px,rgba(205,172,198,0.65) 49.5px,rgba(182,180,220,0.7) 54.0px,rgba(135,135,172,0.4) 58.5px,rgba(255,98,112,0.8075) 62.0px,rgba(255,100,114,0.8075) 67.5px,rgba(160,145,180,0.45) 70.5px,rgba(165,160,205,0.55) 74.0px,rgba(195,190,245,0.9) 76.5px,rgba(195,190,245,0.88) 81.0px,rgba(165,155,165,0.5) 84.0px,rgba(165,155,140,0.45) 91.0px,rgba(180,158,138,0.5) 97.0px,rgba(220,165,128,0.88) 99.5px,rgba(220,165,128,0.88) 106.5px,rgba(200,165,180,0.6) 108.5px,rgba(215,180,205,0.72) 110.5px,rgba(210,178,202,0.68) 114.5px,rgba(175,175,205,0.5) 116.5px,rgba(200,205,240,0.8) 118.5px,rgba(200,205,240,0.78) 122.0px,rgba(180,140,140,0.5) 124.0px,rgba(185,125,115,0.6) 126.5px,rgba(140,120,140,0.35) 130.0px,rgba(110,135,165,0.25) 135.0px,rgba(95,170,210,0.35) 138.0px,rgba(110,228,248,0.85) 140.5px,rgba(125,238,252,1.0) 142.5px,rgba(125,238,252,1.0) 149.5px,rgba(130,205,238,0.65) 152.5px,rgba(140,190,225,0.55) 154.5px,rgba(195,150,150,0.65) 156.5px,rgba(150,100,100,0.4) 160.0px,rgba(150,100,100,0) 166.0px);filter:url(#hb2)"></div><div class="a" style="left:2.5px;right:2.5px;top:157.0px;height:9px;background:rgba(150,95,85,0.7);filter:blur(1.5px);border-radius:4px"></div><div class="a" style="left:4px;right:4px;top:160.5px;height:4px;background:#5e3830;filter:blur(0.7px);border-radius:3px"></div></div><div class="trk" style="left:724.1px;background:linear-gradient(#21344a 0.0px,#1e3045 35.0px,#1b2d40 170.0px);"><div class="a" style="left:2.5px;right:2.5px;top:37.0px;height:4px;background:rgba(15,25,35,0.3);filter:blur(1.8px);border-radius:0px"></div><div class="a" style="left:2.5px;right:2.5px;top:46.5px;height:4px;background:rgba(40,110,95,0.2);filter:blur(1.8px);border-radius:0px"></div><div class="a" style="left:2.5px;right:2.5px;top:127.5px;height:5px;background:rgba(110,60,50,0.25);filter:blur(1.8px);border-radius:0px"></div><div class="a" style="left:2.5px;right:2.5px;top:160.2px;height:2.5px;background:rgba(70,130,140,0.4);filter:blur(1px);border-radius:0px"></div></div><div class="trk" style="left:757.5px;background:linear-gradient(#21344a 0.0px,#1e3045 35.0px,#1b2d40 170.0px);"></div><div class="lbl" style="left:245.2px;top:359.4px">S24925-01-230614<br>Withania root&nbsp; (200...</div><div class="t" style="left:252.9px;top:546px;font-size:10px;color:#222;">3</div><div class="lbl" style="left:328.0px;top:359.4px">R23988<br>UHM</div><div class="t" style="left:335.8px;top:546px;font-size:10px;color:#222;">1</div><div class="lbl" style="left:361.5px;top:359.4px">S25168-01-230614<br>Withania root&nbsp; 1 % le...</div><div class="t" style="left:369.3px;top:546px;font-size:10px;color:#222;">4</div><div class="lbl" style="left:394.9px;top:359.4px">S2516-01-230614<br>Withania root&nbsp; 2 % le...</div><div class="t" style="left:402.7px;top:546px;font-size:10px;color:#222;">5</div><div class="lbl" style="left:428.3px;top:359.4px">S25170-01-230614<br>Withania root&nbsp; 5 % le...</div><div class="t" style="left:436.1px;top:546px;font-size:10px;color:#222;">6</div><svg class="x" style="left:433.9px" width="10" height="10"><path d="M1.5 1.5L8.5 8.5M8.5 1.5L1.5 8.5" stroke="#d9482e" stroke-width="2.2"/></svg><div class="lbl" style="left:461.8px;top:359.4px">S25171-01-230614<br>Withania root&nbsp; 10 % l...</div><div class="t" style="left:469.6px;top:546px;font-size:10px;color:#222;">7</div><svg class="x" style="left:467.4px" width="10" height="10"><path d="M1.5 1.5L8.5 8.5M8.5 1.5L1.5 8.5" stroke="#d9482e" stroke-width="2.2"/></svg><div class="lbl" style="left:495.2px;top:359.4px">R23988<br>UHM</div><div class="t" style="left:503.0px;top:546px;font-size:10px;color:#222;">8</div><div class="lbl" style="left:528.6px;top:359.4px">S25172-01-230614<br>Withania root&nbsp; 30 % l...</div><div class="t" style="left:536.4px;top:546px;font-size:10px;color:#222;">9</div><svg class="x" style="left:534.2px" width="10" height="10"><path d="M1.5 1.5L8.5 8.5M8.5 1.5L1.5 8.5" stroke="#d9482e" stroke-width="2.2"/></svg><div class="lbl" style="left:562.1px;top:359.4px">S25173-01-230614<br>Withania root&nbsp; 50 % l...</div><div class="t" style="left:567.4px;top:546px;font-size:10px;color:#222;">10</div><svg class="x" style="left:567.7px" width="10" height="10"><path d="M1.5 1.5L8.5 8.5M8.5 1.5L1.5 8.5" stroke="#d9482e" stroke-width="2.2"/></svg><div class="lbl" style="left:595.5px;top:359.4px">S24909-01-230614<br>Withania leaf&nbsp; (200...</div><div class="t" style="left:600.8px;top:546px;font-size:10px;color:#222;">11</div><svg class="x" style="left:601.1px" width="10" height="10"><path d="M1.5 1.5L8.5 8.5M8.5 1.5L1.5 8.5" stroke="#d9482e" stroke-width="2.2"/></svg><div class="lbl" style="left:628.9px;top:359.4px">S24925-01-230614<br>Withania root&nbsp; (200...</div><div class="t" style="left:634.2px;top:546px;font-size:10px;color:#222;">12</div><div class="lbl" style="left:662.4px;top:359.4px">S24909-01-230614<br>Withania leaf&nbsp; (200...</div><div class="t" style="left:667.7px;top:546px;font-size:10px;color:#222;">13</div><svg class="x" style="left:668.0px" width="10" height="10"><path d="M1.5 1.5L8.5 8.5M8.5 1.5L1.5 8.5" stroke="#d9482e" stroke-width="2.2"/></svg><div class="lbl" style="left:695.8px;top:359.4px">S24909-01-230614<br>Withania leaf&nbsp; (200...</div><div class="t" style="left:701.1px;top:546px;font-size:10px;color:#222;">14</div><svg class="x" style="left:701.4px" width="10" height="10"><path d="M1.5 1.5L8.5 8.5M8.5 1.5L1.5 8.5" stroke="#d9482e" stroke-width="2.2"/></svg><div class="lbl" style="left:729.2px;top:359.4px">R23988<br>UHM</div><div class="t" style="left:734.5px;top:546px;font-size:10px;color:#222;">15</div><div class="lbl" style="left:762.6px;top:359.4px">R12105-230612-02+...<br>Withanone (0.2 mg7...</div><div class="t" style="left:770.4px;top:546px;font-size:10px;color:#222;">2</div><div class="a" style="left:427.8px;top:464.5px;width:4.6px;height:7.6px;background:#ffff00"></div><div class="a" style="left:446.1px;top:464.5px;width:4.6px;height:7.6px;background:#ffff00"></div><div class="a" style="left:461.2px;top:464.5px;width:4.6px;height:7.6px;background:#ffff00"></div><div class="a" style="left:479.5px;top:464.5px;width:4.6px;height:7.6px;background:#ffff00"></div><div class="a" style="left:528.1px;top:464.5px;width:4.6px;height:7.6px;background:#ffff00"></div><div class="a" style="left:546.4px;top:464.5px;width:4.6px;height:7.6px;background:#ffff00"></div><div class="a" style="left:561.5px;top:464.5px;width:4.6px;height:7.6px;background:#ffff00"></div><div class="a" style="left:579.8px;top:464.5px;width:4.6px;height:7.6px;background:#ffff00"></div><div class="a" style="left:594.9px;top:464.5px;width:4.6px;height:7.6px;background:#ffff00"></div><div class="a" style="left:613.2px;top:464.5px;width:4.6px;height:7.6px;background:#ffff00"></div><div class="a" style="left:661.8px;top:464.5px;width:4.6px;height:7.6px;background:#ffff00"></div><div class="a" style="left:680.1px;top:464.5px;width:4.6px;height:7.6px;background:#ffff00"></div><div class="a" style="left:695.2px;top:464.5px;width:4.6px;height:7.6px;background:#ffff00"></div><div class="a" style="left:713.5px;top:464.5px;width:4.6px;height:7.6px;background:#ffff00"></div><div class="a" style="left:234px;top:464px;width:556px;height:1.2px;background:repeating-linear-gradient(90deg,rgba(232,40,48,0.85) 0 3.6px,rgba(30,30,40,0.8) 3.6px 5.4px);background-position:-0.4px 0"></div><div class="a" style="left:234px;top:471.9px;width:556px;height:1.2px;background:repeating-linear-gradient(90deg,#d02028 0 3.6px,rgba(30,30,40,0.9) 3.6px 5.4px);background-position:-0.4px 0"></div><div class="a" style="left:230.2px;top:373px;width:1.2px;height:155px;background:#2a2a2a"></div><div class="a" style="left:228.3px;top:527px;width:5px;height:1.2px;background:#2a2a2a"></div><div class="a" style="left:228.3px;top:372.8px;width:5px;height:1px;background:#666"></div><div class="a" style="left:228.8px;top:511.2px;width:4px;height:1.6px;border-radius:1px;background:#222"></div><div class="a" style="left:228.8px;top:495.8px;width:4px;height:1.6px;border-radius:1px;background:#222"></div><div class="a" style="left:228.8px;top:480.5px;width:4px;height:1.6px;border-radius:1px;background:#222"></div><div class="a" style="left:228.8px;top:465.1px;width:4px;height:1.6px;border-radius:1px;background:#222"></div><div class="a" style="left:228.8px;top:449.7px;width:4px;height:1.6px;border-radius:1px;background:#222"></div><div class="a" style="left:228.8px;top:434.3px;width:4px;height:1.6px;border-radius:1px;background:#222"></div><div class="a" style="left:228.8px;top:418.9px;width:4px;height:1.6px;border-radius:1px;background:#222"></div><div class="a" style="left:228.8px;top:403.6px;width:4px;height:1.6px;border-radius:1px;background:#222"></div><div class="a" style="left:228.8px;top:388.2px;width:4px;height:1.6px;border-radius:1px;background:#222"></div><div class="t" style="left:218.3px;top:505px;font-size:7px;color:#222;transform:scaleX(0.9557);transform-origin:0 0;">0.1</div><div class="t" style="left:218.3px;top:490px;font-size:7px;color:#222;transform:scaleX(0.9557);transform-origin:0 0;">0.2</div><div class="t" style="left:218.3px;top:474px;font-size:7px;color:#222;transform:scaleX(0.9557);transform-origin:0 0;">0.3</div><div class="t" style="left:218.3px;top:459px;font-size:7px;color:#222;transform:scaleX(0.9557);transform-origin:0 0;">0.4</div><div class="t" style="left:218.3px;top:443px;font-size:7px;color:#222;transform:scaleX(0.9557);transform-origin:0 0;">0.5</div><div class="t" style="left:218.3px;top:428px;font-size:7px;color:#222;transform:scaleX(0.9557);transform-origin:0 0;">0.6</div><div class="t" style="left:218.3px;top:413px;font-size:7px;color:#222;transform:scaleX(0.9557);transform-origin:0 0;">0.7</div><div class="t" style="left:218.3px;top:397px;font-size:7px;color:#222;transform:scaleX(0.9557);transform-origin:0 0;">0.8</div><div class="t" style="left:218.3px;top:382px;font-size:7px;color:#222;transform:scaleX(0.9557);transform-origin:0 0;">0.9</div><div class="t" style="left:219.7px;top:370px;font-size:8.5px;line-height:12px;color:#444"><i style="font-family:'Liberation Serif'">R</i><span style="font-size:5.5px;font-weight:bold">F</span></div><div class="a" style="left:793.8px;top:373px;width:1.2px;height:155px;background:#2a2a2a"></div><div class="a" style="left:791.9px;top:527px;width:5px;height:1.2px;background:#2a2a2a"></div><div class="a" style="left:791.9px;top:372.8px;width:5px;height:1px;background:#666"></div><div class="a" style="left:792.4px;top:511.2px;width:4px;height:1.6px;border-radius:1px;background:#222"></div><div class="a" style="left:792.4px;top:495.8px;width:4px;height:1.6px;border-radius:1px;background:#222"></div><div class="a" style="left:792.4px;top:480.5px;width:4px;height:1.6px;border-radius:1px;background:#222"></div><div class="a" style="left:792.4px;top:465.1px;width:4px;height:1.6px;border-radius:1px;background:#222"></div><div class="a" style="left:792.4px;top:449.7px;width:4px;height:1.6px;border-radius:1px;background:#222"></div><div class="a" style="left:792.4px;top:434.3px;width:4px;height:1.6px;border-radius:1px;background:#222"></div><div class="a" style="left:792.4px;top:418.9px;width:4px;height:1.6px;border-radius:1px;background:#222"></div><div class="a" style="left:792.4px;top:403.6px;width:4px;height:1.6px;border-radius:1px;background:#222"></div><div class="a" style="left:792.4px;top:388.2px;width:4px;height:1.6px;border-radius:1px;background:#222"></div><div class="t" style="left:797.7px;top:505px;font-size:7px;color:#222;transform:scaleX(0.9557);transform-origin:0 0;">0.1</div><div class="t" style="left:797.7px;top:490px;font-size:7px;color:#222;transform:scaleX(0.9557);transform-origin:0 0;">0.2</div><div class="t" style="left:797.7px;top:474px;font-size:7px;color:#222;transform:scaleX(0.9557);transform-origin:0 0;">0.3</div><div class="t" style="left:797.7px;top:459px;font-size:7px;color:#222;transform:scaleX(0.9557);transform-origin:0 0;">0.4</div><div class="t" style="left:797.7px;top:443px;font-size:7px;color:#222;transform:scaleX(0.9557);transform-origin:0 0;">0.5</div><div class="t" style="left:797.7px;top:428px;font-size:7px;color:#222;transform:scaleX(0.9557);transform-origin:0 0;">0.6</div><div class="t" style="left:797.7px;top:413px;font-size:7px;color:#222;transform:scaleX(0.9557);transform-origin:0 0;">0.7</div><div class="t" style="left:797.7px;top:397px;font-size:7px;color:#222;transform:scaleX(0.9557);transform-origin:0 0;">0.8</div><div class="t" style="left:797.7px;top:382px;font-size:7px;color:#222;transform:scaleX(0.9557);transform-origin:0 0;">0.9</div><div class="t" style="left:798.2px;top:370px;font-size:8.5px;line-height:12px;color:#444"><i style="font-family:'Liberation Serif'">R</i><span style="font-size:5.5px;font-weight:bold">F</span></div><div class="a" style="left:317.4px;top:383.7px;width:2.4px;height:2.4px;border-radius:50%;background:#c4c4c4"></div><div class="a" style="left:317.4px;top:390.5px;width:2.4px;height:2.4px;border-radius:50%;background:#c4c4c4"></div><div class="a" style="left:317.4px;top:397.2px;width:2.4px;height:2.4px;border-radius:50%;background:#c4c4c4"></div><div class="a" style="left:239px;top:556px;width:60px;height:10.5px;background:#f0f0f0"></div><svg class="a" style="left:243px;top:558.5px" width="3" height="5"><path d="M3 0V5L0 2.5Z" fill="#bbb"/></svg><svg class="a" style="left:291.5px;top:558.5px" width="3" height="5"><path d="M0 0V5L3 2.5Z" fill="#bbb"/></svg><div class="a" style="left:322px;top:556px;width:467.5px;height:10.5px;background:#f0f0f0"></div><svg class="a" style="left:325.5px;top:558.5px" width="3" height="5"><path d="M3 0V5L0 2.5Z" fill="#bbb"/></svg><svg class="a" style="left:782px;top:558.5px" width="3" height="5"><path d="M0 0V5L3 2.5Z" fill="#bbb"/></svg><div class="a" style="left:291px;top:65px;width:37px;height:59px;border:4px solid #ff0000"></div></div></body></html>
